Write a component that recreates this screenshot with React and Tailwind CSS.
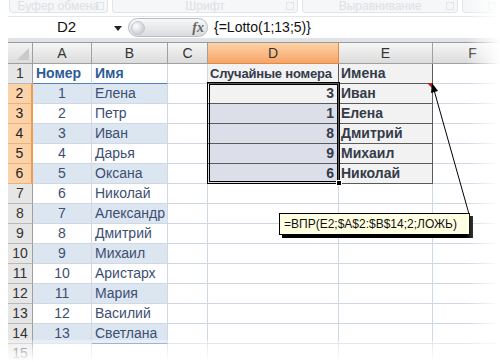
import React from 'react';

const names = ['Елена', 'Петр', 'Иван', 'Дарья', 'Оксана', 'Николай', 'Александр', 'Дмитрий', 'Михаил', 'Аристарх', 'Мария', 'Василий', 'Светлана'];
const picks = [[3, 'Иван'], [1, 'Елена'], [8, 'Дмитрий'], [9, 'Михаил'], [6, 'Николай']];
const cols = ['A', 'B', 'C', 'D', 'E', 'F'];

const grid = 'border-r border-b border-[#d0d7e5]';

const RibbonGroup = ({ label, className = '' }) => (
  <div className={`relative flex h-[13px] items-end justify-center rounded-b-[4px] border border-t-0 border-[#e1e5ea] bg-[#f5f7f9] ${className}`}>
    <span className="text-[12px] leading-[12px] text-[#dde0e4]">{label}</span>
    <span className="absolute right-[3px] bottom-[2px] h-[8px] w-[8px] border border-[#e1e5ea]" />
  </div>
);

const RowHeader = ({ n }) => {
  const sel = n >= 2 && n <= 6;
  return (
    <div
      className={`flex h-[20px] items-center justify-center border-b text-[14px] ${
        sel
          ? 'border-r-2 border-r-[#f29a4e] border-b-[#eeb07c] bg-[#fcd2a8] text-[#222]'
          : 'border-r border-r-[#9f9f9f] border-b-[#b9b9b9] bg-[#e6e6e6] text-[#333]'
      }`}
    >
      {n}
    </div>
  );
};

const Row = ({ n }) => {
  const band = n >= 2 && n <= 14 && n % 2 === 0;
  const ab = band ? 'bg-[#dce6f1]' : 'bg-white';
  const pick = n >= 2 && n <= 6 ? picks[n - 2] : null;

  let a = null;
  let b = null;
  if (n === 1) {
    a = <span className="font-bold text-[#2d5b98]">Номер</span>;
    b = <span className="font-bold text-[#2d5b98]">Имя</span>;
  } else if (n <= 14) {
    a = n - 1;
    b = names[n - 2];
  }

  return (
    <>
      <RowHeader n={n} />
      <div
        className={`flex h-[20px] items-center justify-center border-r border-b ${ab} ${
          n === 1 ? 'border-b-[#4f81bd] border-r-[#d0d7e5] justify-start pl-[3px]' : 'border-[#d0d7e5] text-[#3d4e72]'
        }`}
      >
        {a}
      </div>
      <div
        className={`flex h-[20px] items-center whitespace-nowrap border-r border-b pl-[3px] ${ab} ${
          n === 1 || n === 14 ? 'border-b-[#4f81bd] border-r-[#d0d7e5]' : 'border-[#d0d7e5]'
        } text-[#3d4e72]`}
      >
        {b}
      </div>
      <div className={`h-[20px] ${grid}`} />
      {n === 1 ? (
        <div className="flex h-[20px] items-center whitespace-nowrap border-r border-b border-[#5a5a5a] bg-[#f2f2f2] pl-[2px] text-[13px] font-bold tracking-[-0.2px] text-[#343b49]">
          Случайные номера
        </div>
      ) : pick ? (
        <div
          className={`flex h-[20px] items-center justify-end border-r border-b border-[#5a5a5a] pr-[4px] font-bold text-[#343b49] ${
            n === 2 ? 'bg-[#f2f2f2]' : 'bg-[#dcdfe9]'
          }`}
        >
          {pick[0]}
        </div>
      ) : (
        <div className={`h-[20px] ${grid}`} />
      )}
      {n === 1 || pick ? (
        <div className="flex h-[20px] items-center border-r border-b border-[#5a5a5a] bg-[#f2f2f2] pl-[2px] font-bold text-[#343b49]">
          {n === 1 ? 'Имена' : pick[1]}
        </div>
      ) : (
        <div className={`h-[20px] ${grid}`} />
      )}
      <div className={`h-[20px] ${grid}`} />
    </>
  );
};

export default function App() {
  const rows = Array.from({ length: 15 }, (_, i) => i + 1);

  return (
    <div className="relative h-[362px] w-[500px] overflow-hidden bg-white font-['Liberation_Sans',Arial,sans-serif] text-[14px]">
      {/* ribbon group labels, faded */}
      <div className="flex h-[14px] gap-[4px] pl-[9px]">
        <RibbonGroup label="Буфер обмена" className="w-[103px]" />
        <RibbonGroup label="Шрифт" className="w-[195px]" />
        <RibbonGroup label="Выравнивание" className="w-[162px]" />
        <RibbonGroup label="" className="w-[40px]" />
      </div>

      {/* formula bar */}
      <div className="ml-[8px] mt-[2px] flex h-[22px] items-center border-t border-[#e3e6ea] bg-white">
        <div className="relative flex h-full w-[117px] items-center justify-center text-[15px] text-[#111]">
          D2
          <span className="absolute right-[3px] top-[9px] h-0 w-0 border-x-[4px] border-t-[5px] border-x-transparent border-t-[#222]" />
        </div>
        <div className="ml-[3px] flex h-[19px] w-[80px] items-center justify-between rounded-full border border-[#b8bdc4] bg-linear-to-b from-[#f8f8f8] to-[#d9dbde] pl-[2px] pr-[3px]">
          <span className="h-[14px] w-[14px] rounded-full border border-[#c4c7cb] bg-radial-[at_35%_35%] from-white to-[#b8bcc2]" />
          <span className="font-['Liberation_Serif',serif] text-[14px] font-bold italic text-[#666]">fx</span>
        </div>
        <div className="ml-[6px] text-[14px] text-[#111]">{'{=Lotto(1;13;5)}'}</div>
      </div>
      <div className="ml-[8px] h-[5px] border-b border-[#9a9a9a] bg-[#dfe2e6]" />

      {/* sheet */}
      <div className="ml-[8px] grid grid-cols-[25px_59px_76px_40px_131px_94px_80px]">
        <div className="relative h-[21px] border-r border-b border-[#9f9f9f] bg-linear-to-b from-[#f4f4f4] to-[#dcdcdc]">
          <span className="absolute right-[3px] bottom-[3px] h-0 w-0 [border-bottom:12px_solid_#c9c9c9] [border-left:12px_solid_transparent]" />
        </div>
        {cols.map((c) =>
          c === 'D' ? (
            <div key={c} className="flex h-[21px] items-center justify-center border-r border-b border-r-[#e08a45] border-b-[#e08a45] bg-linear-to-b from-[#fcd3a6] to-[#f6a467] text-[14px] text-[#333]">
              {c}
            </div>
          ) : (
            <div key={c} className="flex h-[21px] items-center justify-center border-r border-b border-[#a0a0a0] bg-linear-to-b from-[#f6f6f6] to-[#dcdcdc] text-[14px] text-[#333]">
              {c}
            </div>
          )
        )}
        {rows.map((n) => (
          <Row key={n} n={n} />
        ))}
      </div>

      {/* selection D2:D6 */}
      <div className="absolute left-[207px] top-[82px] h-[102px] w-[133px] border-[3px] border-double border-black" />
      <div className="absolute left-[336px] top-[180px] h-[6px] w-[6px] border border-white bg-black" />

      {/* comment indicator */}
      <div className="absolute left-[427px] top-[83px] h-0 w-0 border-l-[6px] border-t-[6px] border-l-transparent border-t-[#b3261e]" />

      {/* arrow */}
      <svg className="pointer-events-none absolute left-0 top-0" width="500" height="362">
        <line x1="469" y1="214" x2="434" y2="90" stroke="#000" strokeWidth="1" />
        <polygon points="432,83 431,93 438,91" fill="#000" />
      </svg>

      {/* comment box */}
      <div className="absolute left-[279px] top-[213px] flex h-[22px] w-[191px] items-center whitespace-nowrap border border-black bg-[#ffffe1] pl-[4px] text-[12px] text-[#111] shadow-[3px_3px_0_0_#000]">
        =ВПР(E2;$A$2:$B$14;2;ЛОЖЬ)
      </div>

      {/* fades */}
      <div className="pointer-events-none absolute right-0 top-0 h-full w-[34px] bg-linear-to-r from-transparent to-white" />
      <div className="pointer-events-none absolute bottom-0 left-0 h-[22px] w-full bg-linear-to-b from-white/30 to-white" />
      <div className="pointer-events-none absolute left-0 top-0 h-full w-[8px] bg-white" />
    </div>
  );
}
